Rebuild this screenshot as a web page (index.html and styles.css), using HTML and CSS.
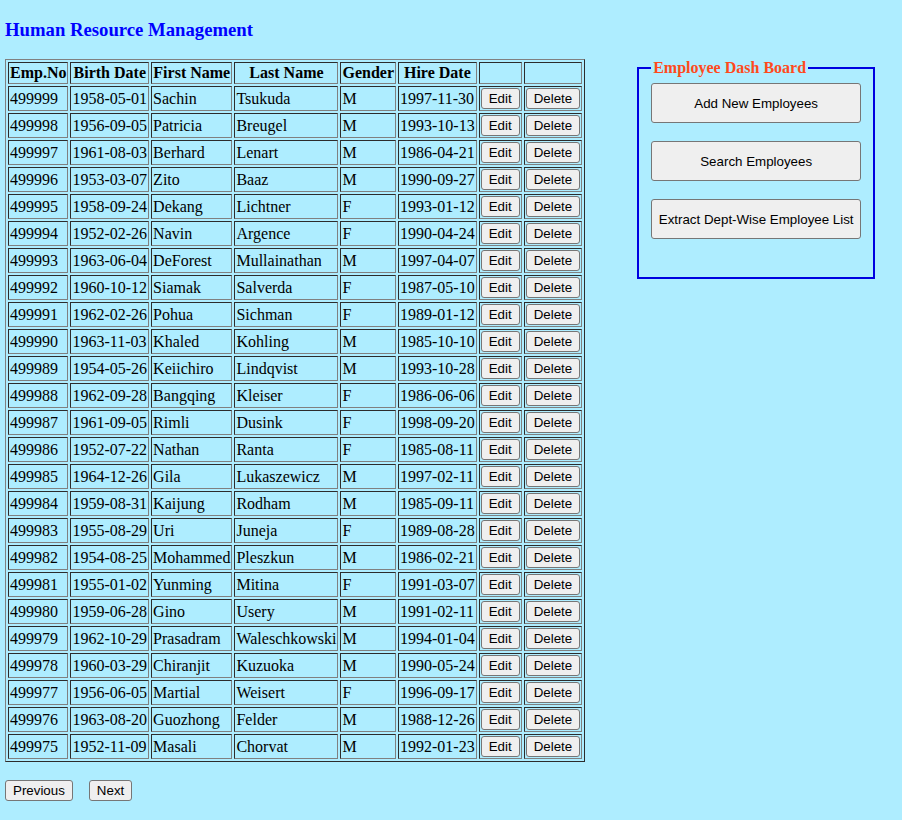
FILE: index.html
```html
<!DOCTYPE html>
<html>
<head>
<meta charset="utf-8">
<title>Human Resource Management</title>
<link rel="stylesheet" href="styles.css">
</head>
<body>
<h3 class="title">Human Resource Management</h3>
<div class="layout">
<div class="left">
<table class="emp">
<thead>
<tr><th>Emp.No</th><th>Birth Date</th><th>First Name</th><th>Last Name</th><th>Gender</th><th>Hire Date</th><th></th><th></th></tr>
</thead>
<tbody>
<tr><td>499999</td><td>1958-05-01</td><td>Sachin</td><td>Tsukuda</td><td>M</td><td>1997-11-30</td><td><button class="btn">Edit</button></td><td><button class="btn">Delete</button></td></tr>
<tr><td>499998</td><td>1956-09-05</td><td>Patricia</td><td>Breugel</td><td>M</td><td>1993-10-13</td><td><button class="btn">Edit</button></td><td><button class="btn">Delete</button></td></tr>
<tr><td>499997</td><td>1961-08-03</td><td>Berhard</td><td>Lenart</td><td>M</td><td>1986-04-21</td><td><button class="btn">Edit</button></td><td><button class="btn">Delete</button></td></tr>
<tr><td>499996</td><td>1953-03-07</td><td>Zito</td><td>Baaz</td><td>M</td><td>1990-09-27</td><td><button class="btn">Edit</button></td><td><button class="btn">Delete</button></td></tr>
<tr><td>499995</td><td>1958-09-24</td><td>Dekang</td><td>Lichtner</td><td>F</td><td>1993-01-12</td><td><button class="btn">Edit</button></td><td><button class="btn">Delete</button></td></tr>
<tr><td>499994</td><td>1952-02-26</td><td>Navin</td><td>Argence</td><td>F</td><td>1990-04-24</td><td><button class="btn">Edit</button></td><td><button class="btn">Delete</button></td></tr>
<tr><td>499993</td><td>1963-06-04</td><td>DeForest</td><td>Mullainathan</td><td>M</td><td>1997-04-07</td><td><button class="btn">Edit</button></td><td><button class="btn">Delete</button></td></tr>
<tr><td>499992</td><td>1960-10-12</td><td>Siamak</td><td>Salverda</td><td>F</td><td>1987-05-10</td><td><button class="btn">Edit</button></td><td><button class="btn">Delete</button></td></tr>
<tr><td>499991</td><td>1962-02-26</td><td>Pohua</td><td>Sichman</td><td>F</td><td>1989-01-12</td><td><button class="btn">Edit</button></td><td><button class="btn">Delete</button></td></tr>
<tr><td>499990</td><td>1963-11-03</td><td>Khaled</td><td>Kohling</td><td>M</td><td>1985-10-10</td><td><button class="btn">Edit</button></td><td><button class="btn">Delete</button></td></tr>
<tr><td>499989</td><td>1954-05-26</td><td>Keiichiro</td><td>Lindqvist</td><td>M</td><td>1993-10-28</td><td><button class="btn">Edit</button></td><td><button class="btn">Delete</button></td></tr>
<tr><td>499988</td><td>1962-09-28</td><td>Bangqing</td><td>Kleiser</td><td>F</td><td>1986-06-06</td><td><button class="btn">Edit</button></td><td><button class="btn">Delete</button></td></tr>
<tr><td>499987</td><td>1961-09-05</td><td>Rimli</td><td>Dusink</td><td>F</td><td>1998-09-20</td><td><button class="btn">Edit</button></td><td><button class="btn">Delete</button></td></tr>
<tr><td>499986</td><td>1952-07-22</td><td>Nathan</td><td>Ranta</td><td>F</td><td>1985-08-11</td><td><button class="btn">Edit</button></td><td><button class="btn">Delete</button></td></tr>
<tr><td>499985</td><td>1964-12-26</td><td>Gila</td><td>Lukaszewicz</td><td>M</td><td>1997-02-11</td><td><button class="btn">Edit</button></td><td><button class="btn">Delete</button></td></tr>
<tr><td>499984</td><td>1959-08-31</td><td>Kaijung</td><td>Rodham</td><td>M</td><td>1985-09-11</td><td><button class="btn">Edit</button></td><td><button class="btn">Delete</button></td></tr>
<tr><td>499983</td><td>1955-08-29</td><td>Uri</td><td>Juneja</td><td>F</td><td>1989-08-28</td><td><button class="btn">Edit</button></td><td><button class="btn">Delete</button></td></tr>
<tr><td>499982</td><td>1954-08-25</td><td>Mohammed</td><td>Pleszkun</td><td>M</td><td>1986-02-21</td><td><button class="btn">Edit</button></td><td><button class="btn">Delete</button></td></tr>
<tr><td>499981</td><td>1955-01-02</td><td>Yunming</td><td>Mitina</td><td>F</td><td>1991-03-07</td><td><button class="btn">Edit</button></td><td><button class="btn">Delete</button></td></tr>
<tr><td>499980</td><td>1959-06-28</td><td>Gino</td><td>Usery</td><td>M</td><td>1991-02-11</td><td><button class="btn">Edit</button></td><td><button class="btn">Delete</button></td></tr>
<tr><td>499979</td><td>1962-10-29</td><td>Prasadram</td><td>Waleschkowski</td><td>M</td><td>1994-01-04</td><td><button class="btn">Edit</button></td><td><button class="btn">Delete</button></td></tr>
<tr><td>499978</td><td>1960-03-29</td><td>Chiranjit</td><td>Kuzuoka</td><td>M</td><td>1990-05-24</td><td><button class="btn">Edit</button></td><td><button class="btn">Delete</button></td></tr>
<tr><td>499977</td><td>1956-06-05</td><td>Martial</td><td>Weisert</td><td>F</td><td>1996-09-17</td><td><button class="btn">Edit</button></td><td><button class="btn">Delete</button></td></tr>
<tr><td>499976</td><td>1963-08-20</td><td>Guozhong</td><td>Felder</td><td>M</td><td>1988-12-26</td><td><button class="btn">Edit</button></td><td><button class="btn">Delete</button></td></tr>
<tr><td>499975</td><td>1952-11-09</td><td>Masali</td><td>Chorvat</td><td>M</td><td>1992-01-23</td><td><button class="btn">Edit</button></td><td><button class="btn">Delete</button></td></tr>
</tbody>
</table>
<div class="pager">
<button class="btn">Previous</button>
<button class="btn">Next</button>
</div>
</div>
<fieldset class="dash">
<legend class="dash-title">Employee Dash Board</legend>
<button class="btn dash-btn">Add New Employees</button>
<button class="btn dash-btn">Search Employees</button>
<button class="btn dash-btn">Extract Dept-Wise Employee List</button>
</fieldset>
</div>
</body>
</html>
```
FILE: styles.css
```css
html, body {
  background: #aeedff;
}
body {
  margin: 0;
  padding: 0 5px;
  font-family: "Liberation Serif", "Times New Roman", serif;
  font-size: 16px;
  color: #000;
}
.title {
  font-size: 18.72px;
  font-weight: bold;
  color: #0000ff;
  margin: 19px 0 18px;
  line-height: 22px;
}
.layout {
  display: flex;
  align-items: flex-start;
  gap: 52px;
}
.left {
  display: flex;
  flex-direction: column;
  align-items: flex-start;
}
.emp {
  border: 1px outset grey;
  border-spacing: 2px;
  border-collapse: separate;
}
.emp th, .emp td {
  border: 1px inset grey;
  padding: 1px;
}
.emp th {
  font-weight: bold;
  text-align: center;
}
.emp td {
  text-align: left;
}
.btn {
  font-family: "Liberation Sans", Arial, sans-serif;
  font-size: 13.333px;
  background: #efefef;
  color: #000;
  border: 1px solid #767676;
  border-radius: 3px;
  padding: 2px 7px;
  margin: 0;
  line-height: normal;
}
.pager {
  display: flex;
  gap: 16px;
  margin-top: 18px;
}
.dash {
  width: 210px;
  margin: 0;
  border: 2px solid #0000e0;
  padding: 6px 12px 38px;
  display: flex;
  flex-direction: column;
  gap: 18px;
}
.dash-title {
  color: #ff4a1c;
  font-weight: bold;
  font-size: 16px;
  padding: 0 2px;
}
.dash-btn {
  width: 210px;
  height: 40px;
  font-size: 13.333px;
  padding: 1px 4px;
}
```
